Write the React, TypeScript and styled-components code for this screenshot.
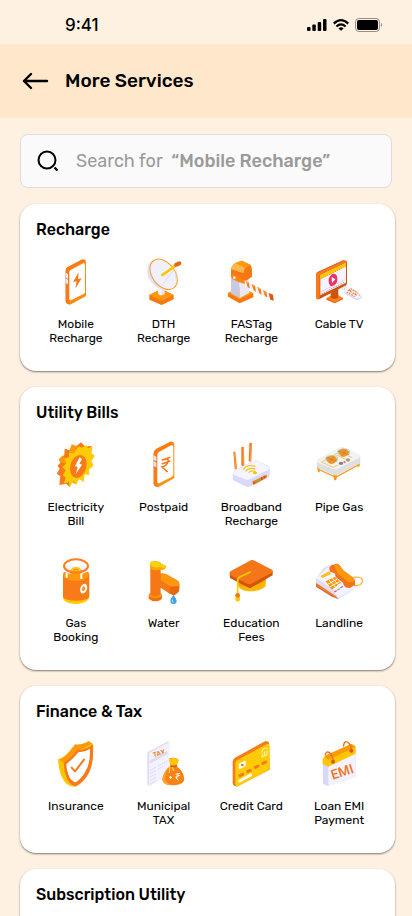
import React from 'react';
import styled, { createGlobalStyle } from 'styled-components';

const GlobalStyle = createGlobalStyle`
  *, *::before, *::after { box-sizing: border-box; }
  body {
    margin: 0;
    background: #fef1e1;
    color: #000;
    font-family: Rubik, Roboto, "Liberation Sans", sans-serif;
  }
`;

const Viewport = styled.div`
  height: 100vh;
  overflow-y: auto;
  scrollbar-width: none;
`;

const StatusBar = styled.div`
  display: flex;
  align-items: center;
  justify-content: space-between;
  height: 44px;
  padding: 6px 29px 0 65px;
`;

const Clock = styled.time`
  font: 500 17px/20px Inter, sans-serif;
`;

const StatusIcons = styled.div`
  display: flex;
  align-items: center;
  gap: 6px;
`;

const Header = styled.header`
  display: flex;
  align-items: center;
  gap: 16px;
  height: 74px;
  padding: 0 22px;
  background: #ffe7cc;
`;

const BackButton = styled.button`
  display: flex;
  padding: 0;
  border: 0;
  background: none;
  cursor: pointer;
`;

const PageTitle = styled.h1`
  margin: 0;
  font-size: 19px;
  line-height: 24px;
  font-weight: 500;
`;

const SearchBox = styled.label`
  position: relative;
  display: flex;
  align-items: center;
  height: 54px;
  margin: 16px 20px;
  padding-left: 16px;
  border: 1px solid #dcdde2;
  border-radius: 8px;
  background: #fafafa;
`;

const SearchInput = styled.input`
  flex: 1;
  min-width: 0;
  height: 100%;
  margin-left: 16px;
  padding: 0;
  border: 0;
  outline: 0;
  background: transparent;
  font: inherit;
  font-size: 18px;

  &:not(:placeholder-shown) + span { display: none; }
  &::placeholder { color: transparent; }
`;

const SearchHint = styled.span`
  position: absolute;
  left: 55px;
  color: #9a9a9a;
  font-size: 18px;
  line-height: 24px;
  white-space: pre;
  pointer-events: none;
`;

const HintTerm = styled.b`
  font-weight: 500;
`;

const Sections = styled.main`
  display: flex;
  flex-direction: column;
  gap: 16px;
  padding: 0 17px 16px 20px;
`;

const Card = styled.section`
  padding: 16px 12px 26px;
  border-radius: 16px;
  background: #fff;
  box-shadow: 0 1px 2px rgba(0, 0, 0, 0.5);
`;

const CardTitle = styled.h2`
  margin: 0 4px 18px;
  font-size: 16px;
  line-height: 20px;
  font-weight: 500;
`;

const ServiceGrid = styled.div`
  display: grid;
  grid-template-columns: repeat(4, 1fr);
  row-gap: 29px;
`;

const Service = styled.a`
  display: flex;
  flex-direction: column;
  align-items: center;
  gap: 11px;
  min-height: 87px;
  color: inherit;
  text-decoration: none;
`;

const ServiceName = styled.span`
  max-width: 68px;
  font-size: 12px;
  line-height: 14px;
  text-align: center;
`;

const Art = ({ box, children }: { box: string; children: React.ReactNode }) => (
  <svg width="48" height="48" viewBox={`${box} 144 144`} fill="none" aria-hidden="true">
    {children}
  </svg>
);

const MobileArt = () => (
  <Art box="66 144">
    <path d="M107 180Q107 174 113 171L155 149Q163 147 168 153V258L120 284L110 280Q107 278 107 272Z" fill="#ff8a12" />
    <path d="M107 180L118 186V284L110 280Q107 278 107 272Z" fill="#f97a18" />
    <path d="M108 177L114 171L155 149Q163 147 167 152L121 177L117 185Z" fill="#f77b1a" />
    <path d="M118 187Q118 182 122 180L160 160Q165 158 165 164V246Q165 250 161 252L124 270Q118 273 118 267Z" fill="#fff" />
    <path d="M107 188l7 4v14l-7-4zM107 205l7 4v14l-7-4z" fill="#e7e6fa" />
    <path d="M146 187L129 216L140 214L136 236L155 205L144 207Z" fill="#f97a18" />
  </Art>
);

const DishArt = () => (
  <Art box="329 144">
    <path d="M357 255L393 237L430 255V268L394 285L357 269Z" fill="#f77712" />
    <path d="M357 255L393 237L430 255L394 273Z" fill="#ff980c" />
    <path d="M384 233h19v19q-9 8-19 0z" fill="#e4e3f8" />
    <path d="M384 233h10v23q-6 0-10-4z" fill="#f5f4ff" />
    <path d="M365 153Q343 166 354 204Q374 240 410 241L425 238L370 150Z" fill="#e2e1f6" />
    <ellipse cx="400" cy="193" rx="34" ry="51" transform="rotate(-37 400 193)" fill="#f1f0fd" stroke="#ff9d23" strokeWidth="3" />
    <path d="M438 176L436 205M438 170L396 225" stroke="#d3d1e8" strokeWidth="2" />
    <path d="M396 195L432 170" stroke="#ffc600" strokeWidth="8" strokeLinecap="round" />
    <path d="M431 168L437 163" stroke="#ff980c" strokeWidth="7" />
    <path d="M438 164L447 160" stroke="#e9660e" strokeWidth="12" strokeLinecap="round" />
  </Art>
);

const BarrierArt = () => (
  <Art box="52 144">
    <path d="M55 249L94 230L131 250V262L90 280L55 260Z" fill="#f77712" />
    <path d="M55 249L94 230L131 250L90 268Z" fill="#ff980c" />
    <path d="M64 198L90 211V264L64 250Z" fill="#cac9e4" />
    <path d="M90 211L119 196V248L90 264Z" fill="#e9e8fa" />
    <path d="M64 178Q67 164 77 160L96 152L122 164Q127 170 127 181V200L104 216L64 200Z" fill="#f77712" />
    <path d="M77 160L96 152L122 164Q112 168 107 174Q104 176 102 190L64 178Q67 164 77 160Z" fill="#ffb84e" />
    <path d="M77 160L96 152L122 164L105 173Z" fill="#ff980c" />
    <path d="M66 193L106 212V222L86 216L66 206Z" fill="#ff8510" />
    <circle cx="74" cy="203" r="4" fill="#fff" />
    <path d="M105 211L192 256V272L105 229Z" fill="#f0effc" />
    <path d="M109 213l9 5l2 17l-6-3zM126 222l10 5l3 18l-7-4zM143 231l10 5l3 18l-7-4zM160 240l10 5l3 17l-7-3z" fill="#f97a18" />
    <path d="M177 249L190 254L192 272L182 269Z" fill="#dc5b0b" />
    <path d="M109 213l8 3-2 5zM126 222l9 3-2 5zM143 231l9 3-2 5zM160 240l9 3-2 5z" fill="#ffb84e" />
  </Art>
);

const TvArt = () => (
  <Art box="315 144">
    <path d="M349 266L374 251L399 264V268L374 280L349 269Z" fill="#e4660b" />
    <path d="M349 264L374 251L399 264L374 276Z" fill="#ff8420" />
    <path d="M362 244l23-12v31q-11 8-23 0z" fill="#cd550b" />
    <path d="M318 194Q318 188 324 185L399 151Q411 151 411 158V219Q411 225 406 227L327 268Q318 269 318 260Z" fill="#d2520b" />
    <path d="M320 190L403 151L411 156L329 195V266L324 268L318 263V194Z" fill="#f97a18" />
    <path d="M331 195L408 158V218L331 256Z" fill="#f5f4ff" />
    <path d="M331 195L408 158V168L331 207Z" fill="#ffc600" />
    <path d="M331 207L408 169" stroke="#ff980c" strokeWidth="3" strokeDasharray="4 3" />
    <ellipse cx="369" cy="210" rx="13" ry="19" transform="rotate(13 369 210)" fill="#ee3168" />
    <path d="M365 201L376 208L366 219Z" fill="#fff" />
    <path d="M334 245L403 210" stroke="#f4b9cb" strokeWidth="2" />
    <path d="M334 252L404 216" stroke="#77798f" strokeWidth="2" strokeDasharray="5 3" />
    <path d="M402 247Q399 239 410 234Q415 231 424 235L451 252Q460 258 454 265Q447 271 438 270L405 251Z" fill="#dad8f1" />
    <path d="M402 245Q400 238 410 234Q415 231 424 235L451 250Q458 256 452 262Q444 267 437 265Z" fill="#f4f3ff" />
    <path d="M414 240l24 15M422 236l23 14M410 246l24 14" stroke="#fb8b35" strokeWidth="4" strokeDasharray="5 3" />
    <path d="M417 239l5 3M434 251l6 4" stroke="#ed3150" strokeWidth="3" />
    <path d="M427 241l6 3M446 254l4 3" stroke="#83cd79" strokeWidth="3" />
    <path d="M397 239Q396 228 408 229M402 240Q401 232 410 233" stroke="#b8c6db" strokeWidth="2" />
  </Art>
);

const ElectricityArt = () => (
  <Art box="66 138">
    <path d="M127 150L135 157L153 142L166 155L184 152L182 174L192 183L182 199L188 209L174 225L173 237L160 238L157 254L141 250L135 266L124 260L119 277L109 266L88 270L91 243L80 236L89 221L83 212L91 203L87 193L103 179L104 161L119 166Z" fill="#f77a17" />
    <path d="M145 154L155 158L171 150L173 160L188 155L184 176L195 182L184 199L191 211L177 224L178 241L164 237L161 261L147 252L138 271L131 258L118 277L117 260L102 266L107 246L98 242L107 226L97 216L108 206L102 191L117 187L117 172L132 174Z" fill="#ffcb04" />
    <path d="M119 166L125 148L142 154L132 174L117 172ZM87 193L96 184L109 188L102 191L108 206L91 203Z" fill="#ff980c" />
    <ellipse cx="145" cy="214" rx="24" ry="35" transform="rotate(17 145 214)" fill="#f97a18" />
    <path d="M149 187L135 213L143 216L137 238L156 209L148 206L156 193Z" fill="#fff" />
  </Art>
);

const PostpaidArt = () => (
  <Art box="329 138">
    <path d="M370 174Q370 166 377 162L419 141Q427 139 432 147V249L384 277L374 273Q370 270 370 265Z" fill="#ff8f10" />
    <path d="M370 174L378 162L419 141Q427 139 431 145L383 171L381 276L373 273L370 268Z" fill="#f97a18" />
    <path d="M381 180Q381 174 386 171L423 151Q429 149 429 156V239Q429 242 425 245L388 264Q381 267 381 261Z" fill="#fff" />
    <path d="M370 181l8 4v14l-8-4zM370 199l8 4v14l-8-4z" fill="#e7e6fa" />
    <path d="M394 196L420 187M394 207L420 198M400 194Q417 188 413 200Q410 212 395 216L412 231" stroke="#f47a1b" strokeWidth="5" />
  </Art>
);

const RouterArt = () => (
  <Art box="52 138">
    <path d="M71 170h6l5 49q-3 5-7 3zM95 157q4-3 8 0l1 54q-5 4-9 0zM119 145q4-3 8 0l-2 53q-4 4-8 0z" fill="#f97a18" />
    <path d="M74 174l4 47M101 160l1 51M124 148l-2 50" stroke="#ffa96a" strokeWidth="2" />
    <path d="M69 236Q70 231 75 226L132 197Q139 194 146 198L176 213Q182 218 180 227V241Q179 247 173 249L124 273Q116 278 107 274L73 257Q68 254 69 248Z" fill="#dad9fa" />
    <path d="M70 237Q70 232 76 228L132 199Q138 196 145 199L176 215Q182 219 176 224L122 252Q114 256 106 253L75 241Q71 240 70 237Z" fill="#f6f5ff" />
    <path d="M129 259L169 239Q173 239 171 248L133 269Q128 270 129 259Z" fill="#f97a18" />
    <path d="M140 256v7M148 251v7" stroke="#56bf60" strokeWidth="4" />
    <path d="M156 247v7M164 243v6M133 260v6" stroke="#bc4d17" strokeWidth="4" />
    <path d="M100 225Q110 207 137 214M108 229Q118 216 137 222M117 233Q125 224 138 230" stroke="#f7c51c" strokeWidth="4" />
    <ellipse cx="136" cy="234" rx="6" ry="4" fill="#f5c100" />
  </Art>
);

const StoveArt = () => (
  <Art box="315 138">
    <path d="M321 214l8 5v13h-5zM369 240h12l-2 16h-6zM440 207l10-5-2 13h-5z" fill="#ff980c" />
    <path d="M324 222L377 247L448 208" stroke="#ff9a1c" strokeWidth="4" />
    <path d="M321 200Q320 195 327 191L388 159Q396 155 404 159L447 179Q452 182 451 188V203Q450 206 445 208L386 238Q377 244 368 239L325 220Q321 218 321 214Z" fill="#dfdfe0" />
    <path d="M321 200Q321 195 329 191L389 159Q396 156 403 159L447 179Q453 184 446 189L387 220Q378 226 368 221L328 205Q321 203 321 200Z" fill="#f4f3f2" />
    <path d="M334 201L390 170L427 188M334 201L370 217L385 209M375 178L413 196" stroke="#efcb72" strokeWidth="3" />
    <ellipse cx="365" cy="192" rx="20" ry="12" fill="#b8dadd" />
    <ellipse cx="401" cy="172" rx="20" ry="12" fill="#b8dadd" />
    <path d="M348 190q18-18 34 2q-8 16-18 15q-11-1-16-17zM384 169q17-16 34 2q-7 14-18 15q-10-1-16-17z" fill="#f99622" />
    <path d="M349 187L380 199M373 182L358 203M385 168L417 179M409 163L394 184" stroke="#b57a37" strokeWidth="2" />
    <ellipse cx="393" cy="205" rx="7" ry="5" fill="#858589" />
    <ellipse cx="414" cy="195" rx="6" ry="5" fill="#9a999b" />
    <path d="M401 203l5-3" stroke="#f17733" strokeWidth="6" />
  </Art>
);

const CylinderArt = () => (
  <Art box="66 21">
    <path d="M99 140Q97 159 137 162Q177 159 177 140L172 131H102Z" fill="#ffcb04" />
    <path d="M99 74Q99 66 107 64H170Q178 66 178 74V140Q174 151 138 152Q102 151 99 140Z" fill="#f87b1a" />
    <path d="M99 74Q102 63 137 61Q174 63 177 74Q174 92 138 93Q102 92 99 74Z" fill="#ff980c" />
    <path d="M101 48H175L172 66Q138 82 104 66Z" fill="#f1f0fd" />
    <ellipse cx="138" cy="66" rx="19" ry="11" fill="#ff980c" />
    <ellipse cx="138" cy="60" rx="14" ry="9" fill="#ffc21c" />
    <path d="M130 60Q138 54 146 60M132 65h12" stroke="#ee8d15" strokeWidth="3" />
    <ellipse cx="138" cy="48" rx="36" ry="20" stroke="#ff7d1c" strokeWidth="6" />
    <path d="M110 67V83M154 70V87" stroke="#fff" strokeWidth="6" />
    <ellipse cx="161" cy="116" rx="10" ry="15" transform="rotate(20 161 116)" fill="#fff" />
    <path d="M162 107Q149 119 160 124Q171 118 162 107Z" fill="#f9981c" />
  </Art>
);

const TapArt = () => (
  <Art box="329 21">
    <path d="M355 134V146Q364 154 376 154Q392 153 395 145V134Z" fill="#f2700f" />
    <ellipse cx="375" cy="135" rx="20" ry="9" fill="#ff980c" />
    <path d="M360 52H391V70L407 72L444 93Q450 102 446 124L431 134L418 131L391 113V134Q375 144 360 134Z" fill="#f57716" />
    <path d="M391 70L407 72L442 93Q449 101 446 108L424 111L391 91Z" fill="#ff980c" />
    <path d="M418 112Q432 106 447 110L444 127L431 137L418 130Z" fill="#e66810" />
    <path d="M358 42Q359 33 375 33Q389 34 394 42L407 47Q409 57 396 60L384 59Q368 64 360 55Z" fill="#f8aa00" />
    <path d="M358 42Q361 33 377 34Q388 36 391 42L406 47Q409 52 401 55L388 51Q367 56 358 42Z" fill="#ffcf12" />
    <path d="M429 135Q420 147 420 153Q420 163 430 162Q440 161 439 152Q438 145 429 135Z" fill="#449fe9" />
    <path d="M426 149Q423 157 430 157" stroke="#bce4ff" strokeWidth="3" />
  </Art>
);

const CapArt = () => (
  <Art box="52 21">
    <path d="M86 80V110Q96 122 120 124Q151 124 168 109V82Z" fill="#ffb500" />
    <path d="M86 91V105Q120 119 168 94V82Z" fill="#ff980c" />
    <path d="M60 70L124 35L189 63V76L124 113Q119 115 114 112L61 84Z" fill="#cf560b" />
    <path d="M60 69Q59 65 65 62L125 30Q130 29 135 32L187 59Q191 63 187 68L125 101Q119 104 113 101L65 77Q60 73 60 69Z" fill="#f57519" />
    <path d="M122 66L89 82Q84 85 84 92V131" stroke="#ffcb04" strokeWidth="5" strokeLinecap="round" />
    <path d="M78 135h12l1 16Q84 159 77 151Z" fill="#ffc800" />
    <circle cx="84" cy="136" r="7" fill="#f57519" />
  </Art>
);

const LandlineArt = () => (
  <Art box="315 21">
    <path d="M318 99L371 128L384 147L364 139L318 110Z" fill="#c75616" />
    <path d="M319 101L374 128L384 139V147L369 139L319 109Z" fill="#f2792e" />
    <path d="M318 85L340 55L364 42L440 86L432 118L385 147L376 137L318 98Z" fill="#dfddf4" />
    <path d="M318 84L364 42L440 90L432 116L385 143L370 119Z" fill="#f4f3ff" />
    <path d="M331 78L358 64L363 72L338 84Z" fill="#ffbe19" />
    <path d="M347 94L375 80L393 98L365 119Z" fill="#ff980c" />
    <path d="M356 89L377 112M366 84L386 105M353 103L382 87M359 111L389 95" stroke="#fff4e5" strokeWidth="3" />
    <path d="M373 126l7-4" stroke="#f54c86" strokeWidth="4" />
    <path d="M382 120l7-4" stroke="#62c36a" strokeWidth="4" />
    <path d="M391 114l8-5" stroke="#af75e4" strokeWidth="4" />
    <path d="M430 82Q460 78 457 95Q453 109 432 106" stroke="#ffb23f" strokeWidth="4" />
    <path d="M358 52Q362 45 374 43Q382 39 389 46L399 60L430 84Q436 88 435 104L421 113Q410 116 402 107L399 98L378 82L374 70L362 66Q357 60 358 52Z" fill="#f1731a" />
    <path d="M372 46Q381 39 389 46L399 60L430 84Q436 90 432 94Q420 99 415 96L384 72Z" fill="#ff980c" />
  </Art>
);

const ShieldArt = () => (
  <Art box="66 135">
    <path d="M84 193Q103 190 128 157Q149 156 176 139L189 147Q192 220 164 252Q145 271 137 275Q115 275 104 260Q87 239 84 193Z" fill="#ffc400" />
    <path d="M89 194Q112 185 135 148Q152 151 176 139L187 146L144 167L104 206Z" fill="#ff980c" />
    <path d="M101 203Q123 190 143 163Q163 168 189 148Q192 203 178 231Q161 264 137 274Q105 267 101 203Z" fill="#f97a18" />
    <path d="M109 207Q129 192 146 171Q163 173 180 161Q181 204 168 226Q157 250 137 262Q113 257 109 207Z" fill="#fff" />
    <path d="M125 218L135 229L162 194" stroke="#f97a18" strokeWidth="6" strokeLinejoin="round" strokeLinecap="round" />
  </Art>
);

const TaxArt = () => (
  <Art box="329 135">
    <path d="M351 172L415 138V238L358 273L351 269Z" fill="#dedcf4" />
    <path d="M356 174L418 141V237L356 272Z" fill="#f3f1ff" />
    <text x="370" y="187" transform="rotate(-16 370 187)" fill="#f97a18" fontFamily="Roboto, sans-serif" fontSize="20" fontWeight="700">TAX</text>
    <path d="M359 201L412 172" stroke="#dcdbe8" strokeWidth="9" strokeDasharray="5 1" />
    <path d="M359 226L376 217M359 236L376 227M359 246L376 237M359 256L376 247M359 266L376 257M382 213L412 198M382 223L402 212" stroke="#dad9ea" strokeWidth="3" strokeDasharray="5 2" />
    <path d="M417 190Q429 186 444 193L438 213Q461 229 462 253Q460 270 429 271Q399 272 396 254Q399 229 420 213Z" fill="#f98212" />
    <path d="M415 194Q429 183 446 195L440 209L422 210Z" fill="#ffc600" />
    <path d="M419 212Q406 229 404 248Q404 265 426 270Q399 272 396 254Q399 229 419 212Z" fill="#ffa72b" />
    <path d="M421 213Q429 219 440 211" stroke="#d95f0b" strokeWidth="5" />
    <path d="M418 216l-1 18M426 216l4 12" stroke="#ffd354" strokeWidth="4" />
    <path d="M416 247h9M421 243v9M436 238l13-3M436 244l13-3M440 236q10 5 0 11l-4 1 9 8" stroke="#fff" strokeWidth="3" />
  </Art>
);

const CreditCardArt = () => (
  <Art box="52 135">
    <path d="M69 200Q69 192 76 188L166 139Q173 137 178 142L180 224L81 275L72 271Q69 269 69 264Z" fill="#f77b1a" />
    <path d="M77 205Q77 198 83 195L172 147Q180 144 180 152V216Q180 223 174 227L86 273Q77 276 77 268Z" fill="#ffcb04" />
    <path d="M88 206L105 197Q108 197 108 201V213L91 222Q87 223 87 218Z" fill="#fff" />
    <circle cx="98" cy="210" r="4" fill="#e56f13" />
    <path d="M91 242l8-4M114 230l8-4M137 217l8-4M160 205l8-4" stroke="#f77b1a" strokeWidth="9" strokeLinecap="round" />
    <path d="M90 258L123 240" stroke="#fff" strokeWidth="9" strokeLinecap="round" />
    <path d="M155 172l8-13 11 2M158 174v12M165 169v12M172 166v12M155 187l19-9" stroke="#fff4c8" strokeWidth="3" />
  </Art>
);

const EmiArt = () => (
  <Art box="315 135">
    <path d="M338 191L351 180L427 149L437 157V245L353 273L339 267Z" fill="#d9d8f8" />
    <path d="M355 211L437 172V242Q436 246 432 248L362 271Q355 272 355 266Z" fill="#f3f2ff" />
    <path d="M338 190L421 148Q434 149 437 156V176L355 215L338 206Z" fill="#ffc600" />
    <path d="M344 182L424 147L437 156L355 194L343 187Z" fill="#ff980c" />
    <path d="M345 180Q349 166 360 174Q372 190 369 202M400 155Q403 132 416 144Q425 152 424 168" stroke="#e8730e" strokeWidth="4" />
    <circle cx="369" cy="200" r="6" fill="#d9590e" />
    <circle cx="424" cy="167" r="6" fill="#d9590e" />
    <text x="368" y="254" transform="rotate(-18 368 254)" fill="#f47218" fontFamily="Roboto, sans-serif" fontSize="40" fontWeight="500">EMI</text>
  </Art>
);

type ServiceItem = { name: string; Icon: React.FC };

const sections: { title: string; items: ServiceItem[] }[] = [
  {
    title: 'Recharge',
    items: [
      { name: 'Mobile Recharge', Icon: MobileArt },
      { name: 'DTH Recharge', Icon: DishArt },
      { name: 'FASTag Recharge', Icon: BarrierArt },
      { name: 'Cable TV', Icon: TvArt },
    ],
  },
  {
    title: 'Utility Bills',
    items: [
      { name: 'Electricity Bill', Icon: ElectricityArt },
      { name: 'Postpaid', Icon: PostpaidArt },
      { name: 'Broadband Recharge', Icon: RouterArt },
      { name: 'Pipe Gas', Icon: StoveArt },
      { name: 'Gas Booking', Icon: CylinderArt },
      { name: 'Water', Icon: TapArt },
      { name: 'Education Fees', Icon: CapArt },
      { name: 'Landline', Icon: LandlineArt },
    ],
  },
  {
    title: 'Finance & Tax',
    items: [
      { name: 'Insurance', Icon: ShieldArt },
      { name: 'Municipal TAX', Icon: TaxArt },
      { name: 'Credit Card', Icon: CreditCardArt },
      { name: 'Loan EMI Payment', Icon: EmiArt },
    ],
  },
  { title: 'Subscription Utility', items: [] },
];

export default function App() {
  return (
    <Viewport>
      <GlobalStyle />
      <StatusBar>
        <Clock>9:41</Clock>
        <StatusIcons>
          <svg width="20" height="12" viewBox="0 0 20 12" aria-hidden="true">
            <rect x="0" y="8" width="3.5" height="4" rx="1" />
            <rect x="5.3" y="5.5" width="3.5" height="6.5" rx="1" />
            <rect x="10.7" y="3" width="3.5" height="9" rx="1" />
            <rect x="16" y="0" width="3.5" height="12" rx="1" />
          </svg>
          <svg width="16" height="12" viewBox="0 0 16 12" fill="none" stroke="#000" strokeWidth="2.2" aria-hidden="true">
            <path d="M.8 4.6Q8-2.2 15.2 4.6M3.4 7.5Q8 3.4 12.6 7.5" />
            <path d="M8 11.8L5.4 9.4Q8 7.2 10.6 9.4Z" fill="#000" stroke="none" />
          </svg>
          <svg width="28" height="14" viewBox="0 0 28 14" fill="none" aria-hidden="true">
            <rect x=".5" y=".5" width="24" height="13" rx="3.5" stroke="#000" strokeOpacity=".4" />
            <rect x="2" y="2" width="21" height="10" rx="2" fill="#000" />
            <path d="M26 4.8Q28 7 26 9.2Z" fill="#000" fillOpacity=".45" />
          </svg>
        </StatusIcons>
      </StatusBar>
      <Header>
        <BackButton aria-label="Back">
          <svg width="27" height="18" viewBox="0 0 27 18" fill="none" stroke="#000" strokeWidth="2.4" strokeLinecap="round" strokeLinejoin="round" aria-hidden="true">
            <path d="M9 2L2 9L9 16M2 9H25" />
          </svg>
        </BackButton>
        <PageTitle>More Services</PageTitle>
      </Header>
      <SearchBox>
        <svg width="22" height="22" viewBox="0 0 22 22" fill="none" stroke="#000" strokeWidth="2" aria-hidden="true">
          <circle cx="10" cy="10" r="8.5" />
          <path d="M17.5 17.5L20.5 20.5" strokeWidth="2.4" />
        </svg>
        <SearchInput type="search" placeholder="Search" aria-label="Search services" />
        <SearchHint>
          Search for {' '}<HintTerm>“Mobile Recharge”</HintTerm>
        </SearchHint>
      </SearchBox>
      <Sections>
        {sections.map(({ title, items }) => (
          <Card key={title}>
            <CardTitle>{title}</CardTitle>
            <ServiceGrid>
              {items.map(({ name, Icon }) => (
                <Service key={name} href="#">
                  <Icon />
                  <ServiceName>{name}</ServiceName>
                </Service>
              ))}
            </ServiceGrid>
          </Card>
        ))}
      </Sections>
    </Viewport>
  );
}
